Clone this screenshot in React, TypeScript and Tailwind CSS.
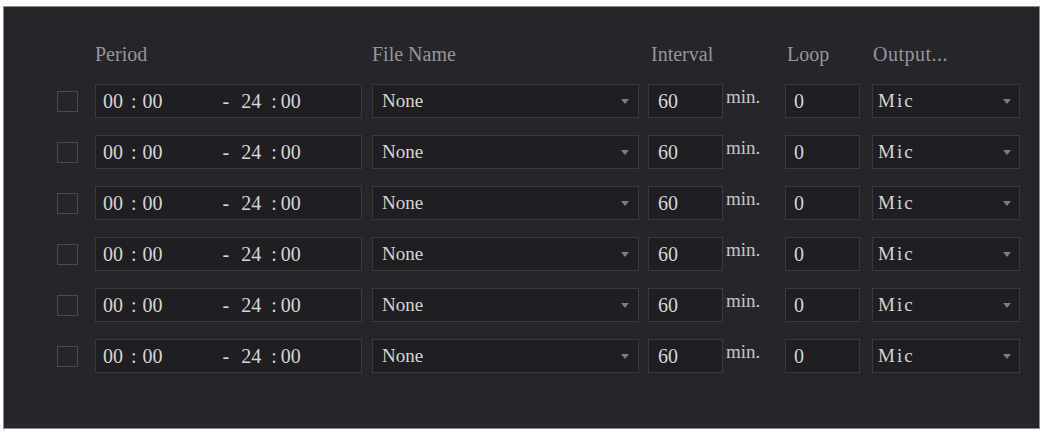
import React from "react";

const rows = [0, 1, 2, 3, 4, 5];

function Arrow() {
    return (
        <svg width="8" height="5" viewBox="0 0 8 5" className="shrink-0">
            <path d="M0 0 L8 0 L4 5 Z" fill="#7d7c82" />
        </svg>
    );
}

function ScheduleRow() {
    return (
        <div className="flex items-center h-[34px]">
            {/* checkbox */}
            <div className="w-[21px] h-[21px] border border-[#4a4950] shrink-0" />

            {/* period */}
            <div className="ml-[17px] w-[267px] h-full border border-[#3a393f] bg-[#1f1e23] flex items-center pl-[7px] text-[#d6d6d6] text-[20px]">
                <span>00</span>
                <span className="ml-[8px]">:</span>
                <span className="ml-[6px]">00</span>
                <span className="ml-[60px]">-</span>
                <span className="ml-[12px]">24</span>
                <span className="ml-[10px]">:</span>
                <span className="ml-[4px]">00</span>
            </div>

            {/* file name */}
            <div className="ml-[10px] w-[267px] h-full border border-[#3a393f] bg-[#1f1e23] flex items-center justify-between pl-[9px] pr-[9px] text-[#d6d6d6]">
                <span>None</span>
                <Arrow />
            </div>

            {/* interval */}
            <div className="ml-[9px] w-[75px] h-full border border-[#3a393f] bg-[#1f1e23] flex items-center pl-[9px] text-[#d6d6d6] text-[20px]">
                60
            </div>
            <div className="w-[62px] h-full pl-[3px] pt-[3px] text-[#c4c4c4] leading-[20px]">min.</div>

            {/* loop */}
            <div className="w-[75px] h-full border border-[#3a393f] bg-[#1f1e23] flex items-center pl-[8px] text-[#d6d6d6] text-[20px]">
                0
            </div>

            {/* output */}
            <div className="ml-[12px] w-[148px] h-full border border-[#3a393f] bg-[#1f1e23] flex items-center justify-between pl-[5px] pr-[8px] text-[#d6d6d6] tracking-[2px]">
                <span>Mic</span>
                <Arrow />
            </div>
        </div>
    );
}

export default function App() {
    return (
        <div
            className="w-[1042px] h-[431px] bg-white pt-[6px] pl-[3px] pr-[2px] pb-[2px]"
            style={{ fontFamily: '"Liberation Serif", "Times New Roman", serif' }}
        >
            <div className="w-full h-full bg-[#26252b] border border-[#8a898e] pt-[37px] pl-[53px] text-[19px]">
                {/* headers */}
                <div className="flex h-[20px] leading-[20px] text-[#96959a] text-[20px]">
                    <div className="w-[21px]" />
                    <div className="ml-[17px] w-[267px]">Period</div>
                    <div className="ml-[10px] w-[267px]">File Name</div>
                    <div className="ml-[9px] w-[137px] pl-[3px]">Interval</div>
                    <div className="w-[75px] pl-[2px]">Loop</div>
                    <div className="ml-[12px] w-[148px] pl-[1px] tracking-[0.5px]">Output...</div>
                </div>

                <div className="mt-[20px] flex flex-col gap-[17px]">
                    {rows.map((r) => (
                        <ScheduleRow key={r} />
                    ))}
                </div>
            </div>
        </div>
    );
}
